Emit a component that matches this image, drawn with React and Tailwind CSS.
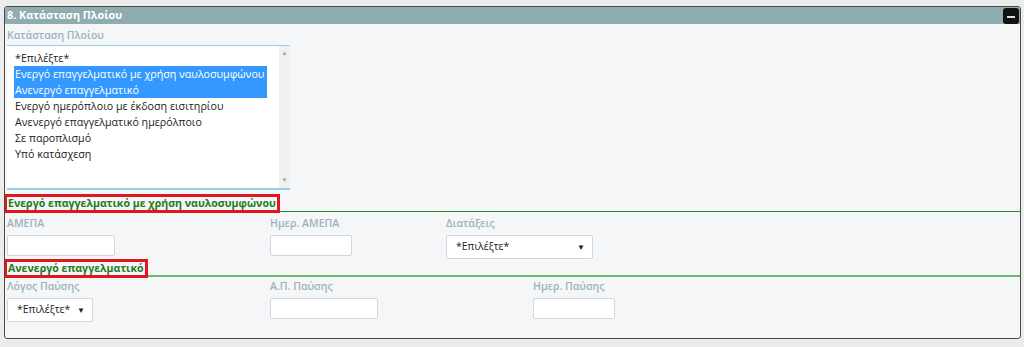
import React from 'react';

const options = [
  { text: '*Επιλέξτε*', selected: false },
  { text: 'Ενεργό επαγγελματικό με χρήση ναυλοσυμφώνου', selected: true },
  { text: 'Ανενεργό επαγγελματικό', selected: true },
  { text: 'Ενεργό ημερόπλοιο με έκδοση εισιτηρίου', selected: false },
  { text: 'Ανενεργό επαγγελματικό ημερόλποιο', selected: false },
  { text: 'Σε παροπλισμό', selected: false },
  { text: 'Υπό κατάσχεση', selected: false },
];

function Label({ children }) {
  return <div className="text-[10.5px] leading-[14px] font-semibold text-[#9fb2bc] whitespace-nowrap">{children}</div>;
}

function TextBox({ w }) {
  return <div className={`${w} h-[21px] bg-white border border-[#d3d6da] rounded-[2px] mt-[5px]`} />;
}

function SelectBox({ w }) {
  return (
    <div className={`${w} h-[24px] bg-white border border-[#d3d6da] rounded-[2px] mt-[5px] flex items-center justify-between pl-[9px] pr-[7px] text-[10.5px] text-[#222]`}>
      <span>*Επιλέξτε*</span>
      <span className="text-[8px] text-[#222]">▼</span>
    </div>
  );
}

function Heading({ children, line }) {
  return (
    <div className="flex items-end -ml-[3px]">
      <div className="border-[3px] border-[#e3161d] px-[1px] h-[19px] flex items-center text-[10.6px] font-bold text-[#1f7a22] whitespace-nowrap">
        {children}
      </div>
      <div className={`flex-1 ${line} mb-[1px]`} />
    </div>
  );
}

export default function App() {
  return (
    <div className="w-[1024px] h-[347px] bg-[#ececec] pt-[6px] pl-[4px]" style={{ fontFamily: '"Open Sans", "Noto Sans", sans-serif' }}>
      <div className="w-[1017px] h-[333px] border border-[#4a4a4a] rounded-[3px] bg-[#f4f6f8] overflow-hidden">
        {/* Заголовок панели */}
        <div className="h-[17px] bg-[#8fadb0] flex items-center justify-between pl-[2px] pr-[1px]">
          <span className="text-[10.8px] font-bold text-white">8. Κατάσταση Πλοίου</span>
          <div className="w-[16px] h-[16px] bg-[#111] rounded-[3px] flex items-center justify-center">
            <div className="w-[8px] h-[2px] bg-[#ddd] mt-[3px]" />
          </div>
        </div>

        <div className="pl-[2px]">
          <div className="mt-[4px]">
            <Label>Κατάσταση Πλοίου</Label>
          </div>

          {/* Список */}
          <div className="mt-[3px] w-[283px] h-[145px] bg-white border-t border-b-2 border-[#8fd3ea] flex">
            <div className="flex-1 pt-[4px] pl-[7px]">
              {options.map((o, i) => (
                <div
                  key={i}
                  className={`h-[16px] leading-[16px] text-[10.7px] pl-[1px] w-[253px] whitespace-nowrap ${o.selected ? 'bg-[#3399ff] text-white' : 'text-[#222]'}`}
                >
                  {o.text}
                </div>
              ))}
            </div>
            <div className="w-[11px] bg-[#f1f1f1] flex flex-col justify-between items-center text-[6px] text-[#a0a0a0] py-[3px]">
              <span>▲</span>
              <span>▼</span>
            </div>
          </div>

          {/* Ενεργό επαγγελματικό με χρήση ναυλοσυμφώνου */}
          <div className="mt-[4px]">
            <Heading line="h-[1px] bg-[#2e8b2e]">Ενεργό επαγγελματικό με χρήση ναυλοσυμφώνου</Heading>
          </div>
          <div className="flex mt-[3px]">
            <div className="w-[263px]">
              <Label>ΑΜΕΠΑ</Label>
              <TextBox w="w-[108px]" />
            </div>
            <div className="w-[176px]">
              <Label>Ημερ. ΑΜΕΠΑ</Label>
              <TextBox w="w-[82px]" />
            </div>
            <div>
              <Label>Διατάξεις</Label>
              <SelectBox w="w-[147px]" />
            </div>
          </div>

          {/* Ανενεργό επαγγελματικό */}
          <div className="mt-0">
            <Heading line="h-[2px] bg-[#6cb96c]">Ανενεργό επαγγελματικό</Heading>
          </div>
          <div className="flex mt-[1px]">
            <div className="w-[263px]">
              <Label>Λόγος Παύσης</Label>
              <SelectBox w="w-[86px]" />
            </div>
            <div className="w-[263px]">
              <Label>Α.Π. Παύσης</Label>
              <TextBox w="w-[108px]" />
            </div>
            <div>
              <Label>Ημερ. Παύσης</Label>
              <TextBox w="w-[82px]" />
            </div>
          </div>
        </div>
      </div>
    </div>
  );
}
